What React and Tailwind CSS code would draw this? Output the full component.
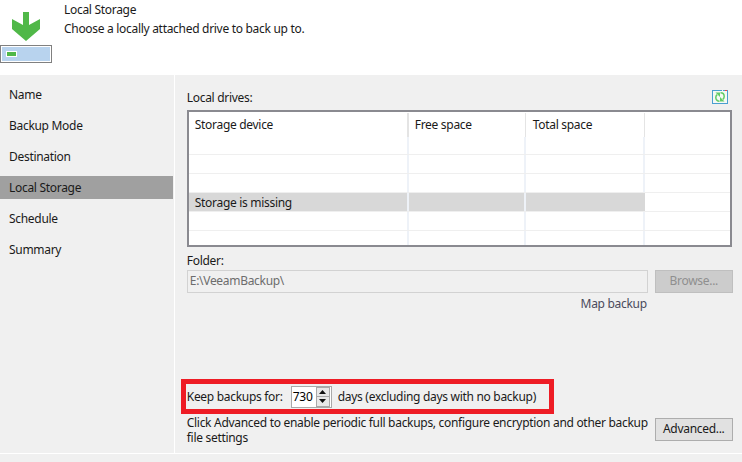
import React from "react";

const steps = ["Name", "Backup Mode", "Destination", "Local Storage", "Schedule", "Summary"];

const rowHeights = ["h-[18px]", "h-[19px]", "h-[19px]", "h-[19px]", "h-[19px]", "h-[15px]"];

const HeaderIcon = () => (
	<svg width="52" height="64" viewBox="0 0 52 64" className="shrink-0">
		<path d="M23 12h6v13l11-6v10L26 41 12 29V19l11 6z" fill="#50b848" />
		<rect x="0.5" y="45.5" width="51" height="17" fill="#b8d3ee" stroke="#808080" />
		<rect x="1.5" y="46.5" width="49" height="15" fill="none" stroke="#ffffff" />
		<rect x="6.5" y="51.5" width="10" height="5" fill="#50b848" stroke="#ffffff" />
	</svg>
);

const RefreshIcon = () => (
	<svg width="16" height="14" viewBox="0 0 16 14">
		<rect x="0.5" y="0.5" width="15" height="13" fill="#f5f9f5" stroke="#4a9fd0" />
		<path d="M7.500 11.200C5.300 11.200 3.800 9.600 3.800 7.500 3.800 6.300 4.300 5.300 5.200 4.600" fill="none" stroke="#62cc66" strokeWidth="1.500" />
		<path d="M3.500 2.500H8V7z" fill="#62cc66" />
		<path d="M8.500 2.800C10.700 2.800 12.200 4.400 12.200 6.500 12.200 7.700 11.700 8.700 10.800 9.400" fill="none" stroke="#62cc66" strokeWidth="1.500" />
		<path d="M12.500 11.500H8V7z" fill="#62cc66" />
		<rect x="10" y="0" width="1" height="1" fill="#f0f0f0" />
		<rect x="13" y="0" width="2" height="1" fill="#e8484d" />
	</svg>
);

const Spinner = () => (
	<div className="flex w-[41px] h-[22px] border border-[#a9a9a9] bg-white">
		<span className="w-[24px] pl-[1px] leading-[19px] text-black">730</span>
		<div className="w-[14px] flex flex-col">
			<div className="h-[10px] flex items-center justify-center border border-[#a9a9a9] bg-[#e8e8e8]">
				<svg width="7" height="4" viewBox="0 0 7 4"><path d="M3.500 0 7 4H0z" fill="#111" /></svg>
			</div>
			<div className="flex-1 flex items-center justify-center border border-t-0 border-[#a9a9a9] bg-[#e8e8e8]">
				<svg width="7" height="4" viewBox="0 0 7 4"><path d="M0 0h7L3.500 4z" fill="#111" /></svg>
			</div>
		</div>
	</div>
);

const Table = () => (
	<div className="w-[545px] h-[137px] border-2 border-[#8a8a90] bg-white text-[#1a1a1a] overflow-hidden">
		<div className="flex h-[24px] mt-[1px]">
			<div className="w-[220px] pl-[6px] leading-[24px] border-r-2 border-[#e4e4e4]">Storage device</div>
			<div className="w-[117px] pl-[6px] leading-[24px] border-r border-[#e4e4e4]">Free space</div>
			<div className="w-[119px] pl-[7px] leading-[24px] border-r border-[#e4e4e4]">Total space</div>
		</div>
		{rowHeights.map((h, i) => (
			<div key={i} className={`flex ${h} border-b border-[#efefef] ${i === 5 ? "border-b-0" : ""}`}>
				<div className={`w-[220px] pl-[6px] leading-[20px] border-r-2 border-[#eef2f8] ${i === 3 ? "bg-[#d8d8d8]" : ""}`}>
					{i === 3 ? "Storage is missing" : ""}
				</div>
				<div className={`w-[117px] border-r-2 border-[#eef2f8] ${i === 3 ? "bg-[#d8d8d8]" : ""}`} />
				<div className={`w-[119px] ${i === 3 ? "bg-[#d8d8d8]" : "border-r-2 border-[#eef2f8]"}`} />
			</div>
		))}
	</div>
);

export default function App() {
	return (
		<div className="w-[742px] h-[462px] overflow-hidden bg-white text-[12px] text-[#1a1a1a] font-['Noto_Sans',sans-serif] tracking-[-0.3px]">
			<div className="flex h-[75px] bg-white">
				<HeaderIcon />
				<div className="ml-[12px] pt-[2px]">
					<div className="h-[19px] leading-[16px]">Local Storage</div>
					<div className="leading-[16px]">Choose a locally attached drive to back up to.</div>
				</div>
			</div>
			<div className="flex h-[378px] bg-[#f0f0f0]">
				<nav className="w-[173px] pt-[8px] flex flex-col gap-[8px]">
					{steps.map((s) => (
						<div key={s} className={`h-[23px] pl-[9px] leading-[24px] ${s === "Local Storage" ? "bg-[#a0a0a0]" : ""}`}>
							{s}
						</div>
					))}
				</nav>
				<main className="w-[569px] ml-[1px] border-l border-white pl-[12px]">
					<div className="flex items-start w-[541px] h-[35px] pt-[15px] justify-between">
						<span className="leading-[16px]">Local drives:</span>
						<RefreshIcon />
					</div>
					<Table />
					<div className="mt-[6px] h-[17px] leading-[16px]">Folder:</div>
					<div className="flex gap-[7px]">
						<div className="w-[461px] h-[23px] border border-[#d2d2d2] pl-[2px] leading-[20px] text-[#6d6d6d]">E:\VeeamBackup\</div>
						<div className="w-[78px] h-[23px] border border-[#bfbfbf] bg-[#cccccc] text-center leading-[20px] text-[#8f8f8f]">Browse...</div>
					</div>
					<div className="w-[460px] text-right mt-[3px] leading-[16px] text-[#4b4b5c]">Map backup</div>
					<div className="mt-[67px] -ml-[6px] flex items-center w-[373px] h-[35px] border-[5px] border-[#ee1c25] pl-[1px]">
						<span className="w-[104px]">Keep backups for:</span>
						<Spinner />
						<span className="ml-[6px]">days (excluding days with no backup)</span>
					</div>
					<div className="flex mt-[4px] w-[546px] justify-between">
						<p className="leading-[15px] -mt-[3px]">Click Advanced to enable periodic full backups, configure encryption and other backup<br />file settings</p>
						<div className="w-[78px] h-[23px] border border-[#adadad] bg-[#e1e1e1] text-center leading-[20px]">Advanced...</div>
					</div>
				</main>
			</div>
			<div className="h-[1px] bg-white" />
			<div className="h-[8px] bg-[#f0f0f0]" />
		</div>
	);
}
